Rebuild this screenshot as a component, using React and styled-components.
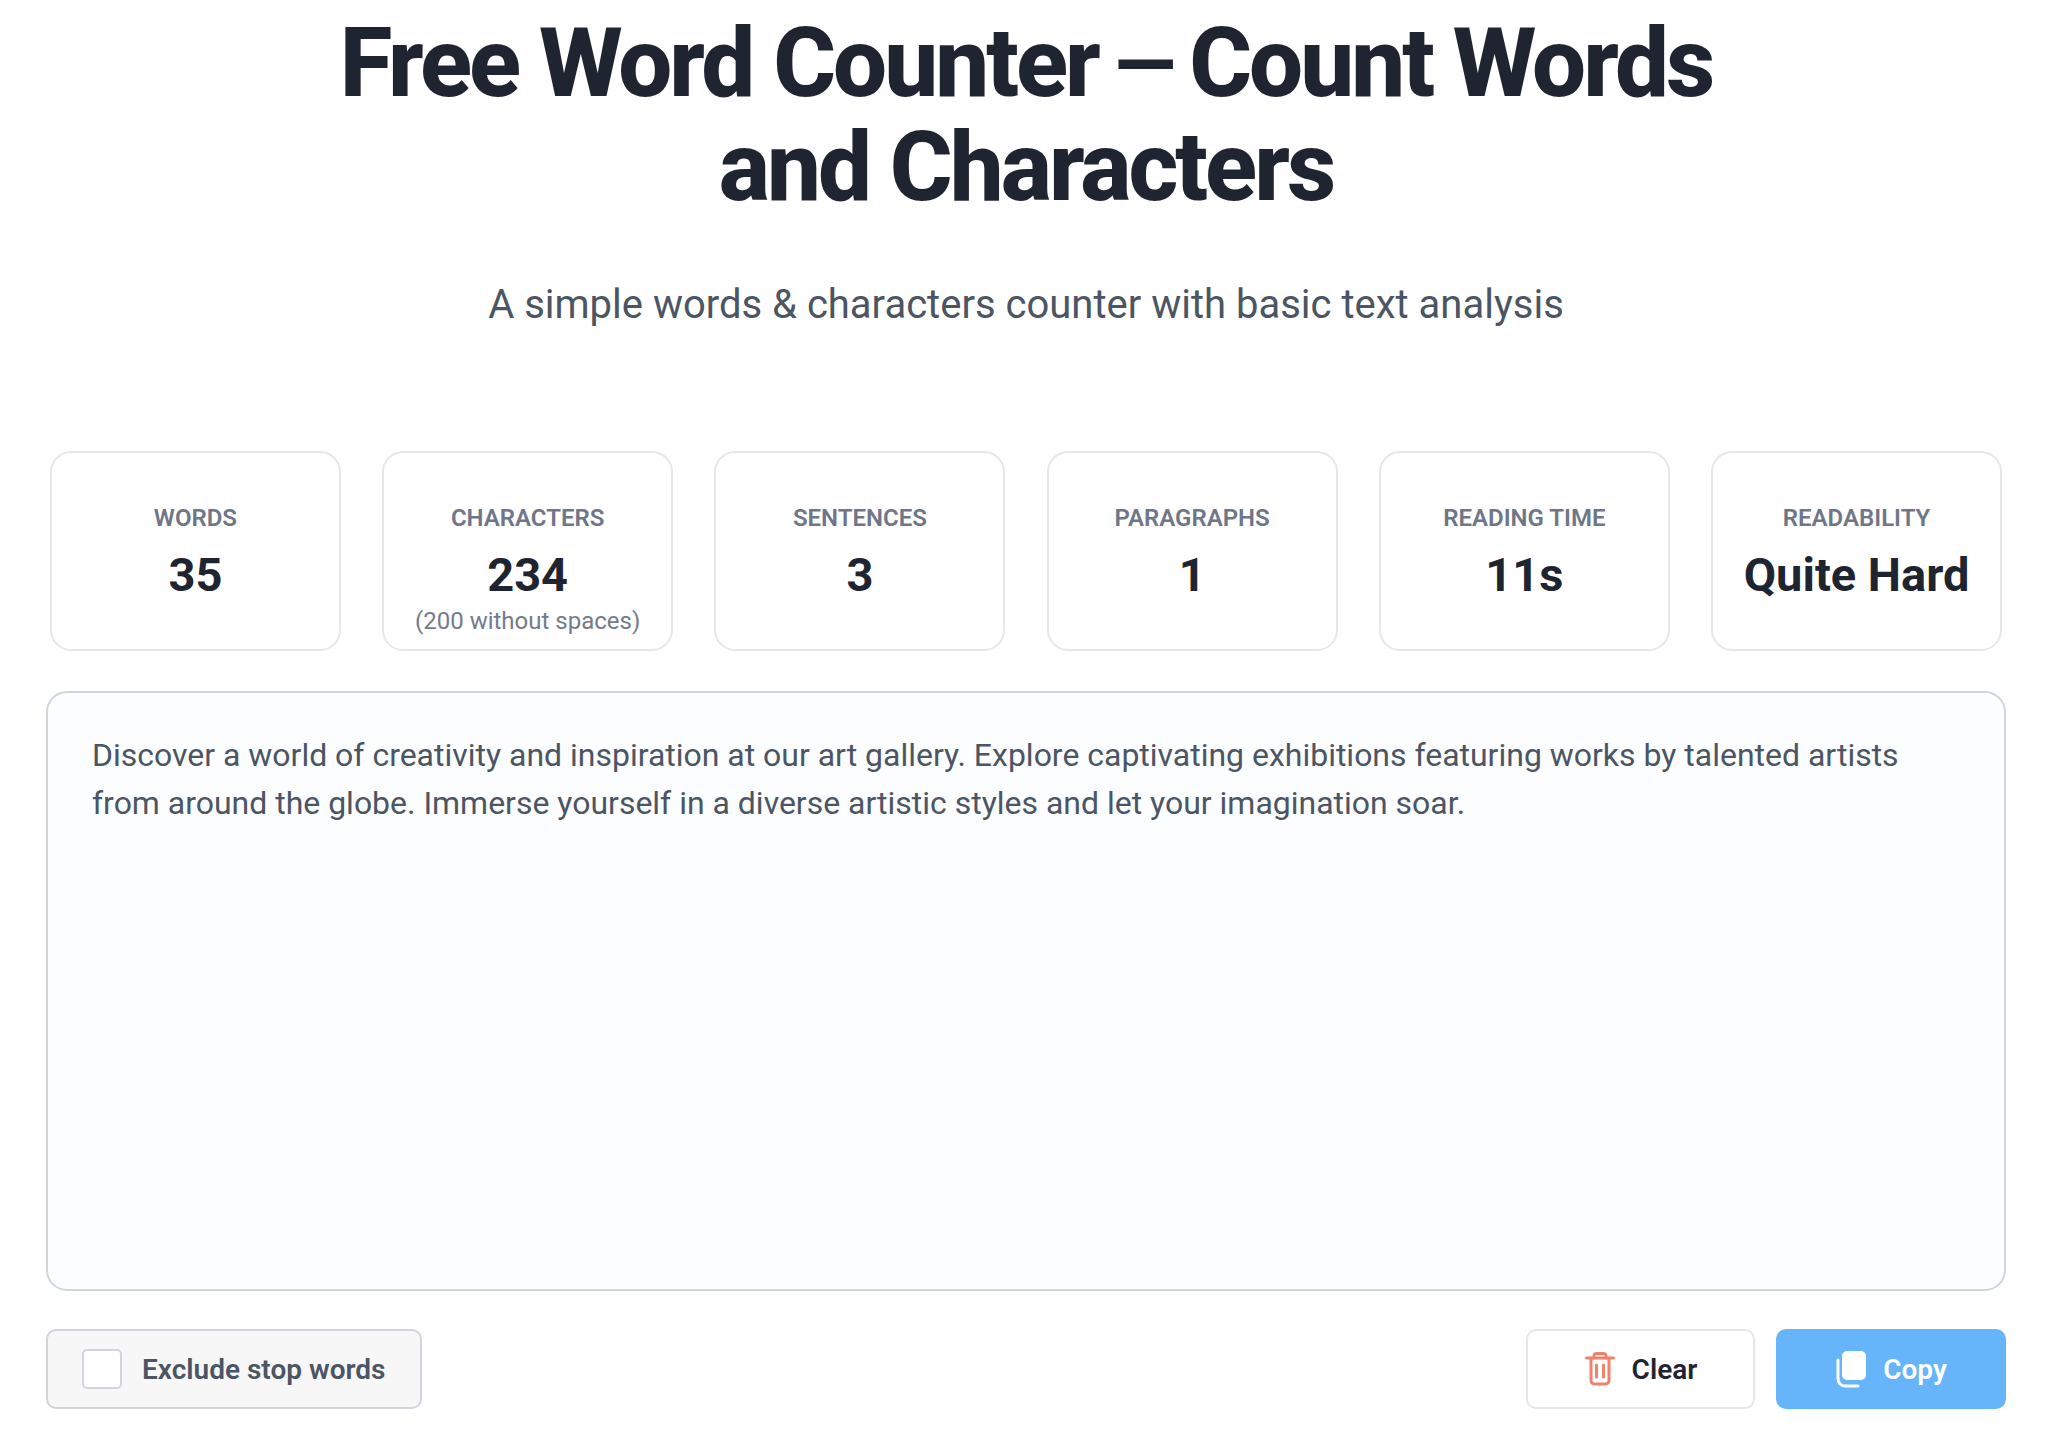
import React from "react";
import styled, { createGlobalStyle } from "styled-components";

const Global = createGlobalStyle`
  html, body { margin: 0; padding: 0; background: #fff; }
  body { font-family: Roboto, "Liberation Sans", sans-serif; }
  * { box-sizing: border-box; }
`;

const Page = styled.main`
  width: 1960px;
  margin-left: 46px;
  padding-top: 11px;
  display: flex;
  flex-direction: column;
`;
const Header = styled.header`
  text-align: center;
`;
const Title = styled.h1`
  margin: 0;
  font-size: 96px;
  line-height: 104px;
  font-weight: 800;
  letter-spacing: -3px;
  color: #1f2530;
`;
const TitleDash = styled.span`
  font-size: 80px;
  line-height: 1;
  vertical-align: 4px;
`;
const Subtitle = styled.p`
  margin: 57px 0 0;
  font-size: 40px;
  line-height: 58px;
  font-weight: 400;
  color: #4b5563;
`;
const Stats = styled.section`
  margin: 117px 4px 0;
  display: grid;
  grid-template-columns: repeat(6, 1fr);
  gap: 41.4px;
`;
const Card = styled.div`
  height: 200px;
  padding-top: 49px;
  background: #fff;
  border: 2px solid #e5e7eb;
  border-radius: 21px;
  text-align: center;
`;
const Label = styled.div`
  font-size: 24px;
  line-height: 32px;
  font-weight: 600;
  color: #6f7688;
`;
const Value = styled.div`
  margin-top: 9px;
  font-size: 47px;
  line-height: 64px;
  font-weight: 700;
  color: #1f2530;
`;
const Note = styled.div`
  margin-top: -2px;
  font-size: 24px;
  line-height: 32px;
  color: #747b8c;
`;
const Editor = styled.textarea`
  display: block;
  margin-top: 40px;
  width: 100%;
  height: 600px;
  padding: 38px 44px;
  resize: none;
  outline: none;
  background: #fcfdfe;
  border: 2px solid #d1d5db;
  border-radius: 21px;
  font-family: inherit;
  font-size: 31.97px;
  line-height: 48px;
  color: #4b5563;
`;
const Toolbar = styled.div`
  margin-top: 38px;
  display: flex;
  justify-content: space-between;
  align-items: stretch;
  height: 80px;
`;
const Toggle = styled.label`
  display: flex;
  align-items: center;
  gap: 20px;
  width: 376px;
  padding-left: 34px;
  background: #f7f7f8;
  border: 2px solid #d1d5db;
  border-radius: 10px;
  font-size: 28px;
  font-weight: 600;
  color: #4b5563;
`;
const Box = styled.span`
  width: 40px;
  height: 40px;
  background: #fff;
  border: 2px solid #d1d5db;
  border-radius: 5px;
`;
const Actions = styled.div`
  display: flex;
  gap: 21px;
`;
const Action = styled.button`
  display: flex;
  align-items: center;
  justify-content: center;
  gap: 16px;
  width: ${(p) => p.$width}px;
  padding: 0;
  border-radius: 10px;
  border: 2px solid ${(p) => (p.$primary ? "#66b5fa" : "#e5e7eb")};
  background: ${(p) => (p.$primary ? "#66b5fa" : "#fff")};
  color: ${(p) => (p.$primary ? "#fff" : "#1f2530")};
  font-family: inherit;
  font-size: 28px;
  font-weight: 600;
`;

const stats = [
  ["WORDS", "35"],
  ["CHARACTERS", "234", "(200 without spaces)"],
  ["SENTENCES", "3"],
  ["PARAGRAPHS", "1"],
  ["READING TIME", "11s"],
  ["READABILITY", "Quite Hard"],
];

const TrashIcon = () => (
  <svg width="32" height="36" viewBox="0 0 32 36" fill="none" stroke="#f0826c" strokeWidth="3" strokeLinecap="round" strokeLinejoin="round">
    <path d="M2.5 7h27" />
    <path d="M10 7V5a2.5 2.5 0 0 1 2.5-2.5h7A2.5 2.5 0 0 1 22 5v2" />
    <path d="M7 7v22.5a3.5 3.5 0 0 0 3.5 3.5h11a3.5 3.5 0 0 0 3.5-3.5V7" />
    <path d="M12.5 14v12M19.5 14v12" />
  </svg>
);

const CopyIcon = () => (
  <svg width="32" height="38" viewBox="0 0 32 38" fill="none">
    <rect x="7" y="1" width="24" height="29" rx="5" fill="#fff" />
    <path d="M3 10v19a7 7 0 0 0 7 7h13" stroke="#fff" strokeWidth="3" strokeLinecap="round" />
  </svg>
);

export default function App() {
  return (
    <>
      <Global />
      <Page>
        <Header>
          <Title>
            Free Word Counter<TitleDash> — </TitleDash>Count Words
            <br />
            and Characters
          </Title>
          <Subtitle>A simple words &amp; characters counter with basic text analysis</Subtitle>
        </Header>
        <Stats>
          {stats.map(([label, value, note]) => (
            <Card key={label}>
              <Label>{label}</Label>
              <Value>{value}</Value>
              {note && <Note>{note}</Note>}
            </Card>
          ))}
        </Stats>
        <Editor
          readOnly
          defaultValue="Discover a world of creativity and inspiration at our art gallery. Explore captivating exhibitions featuring works by talented artists from around the globe. Immerse yourself in a diverse artistic styles and let your imagination soar."
        />
        <Toolbar>
          <Toggle>
            <Box />
            Exclude stop words
          </Toggle>
          <Actions>
            <Action $width={229}>
              <TrashIcon />
              Clear
            </Action>
            <Action $width={230} $primary>
              <CopyIcon />
              Copy
            </Action>
          </Actions>
        </Toolbar>
      </Page>
    </>
  );
}
